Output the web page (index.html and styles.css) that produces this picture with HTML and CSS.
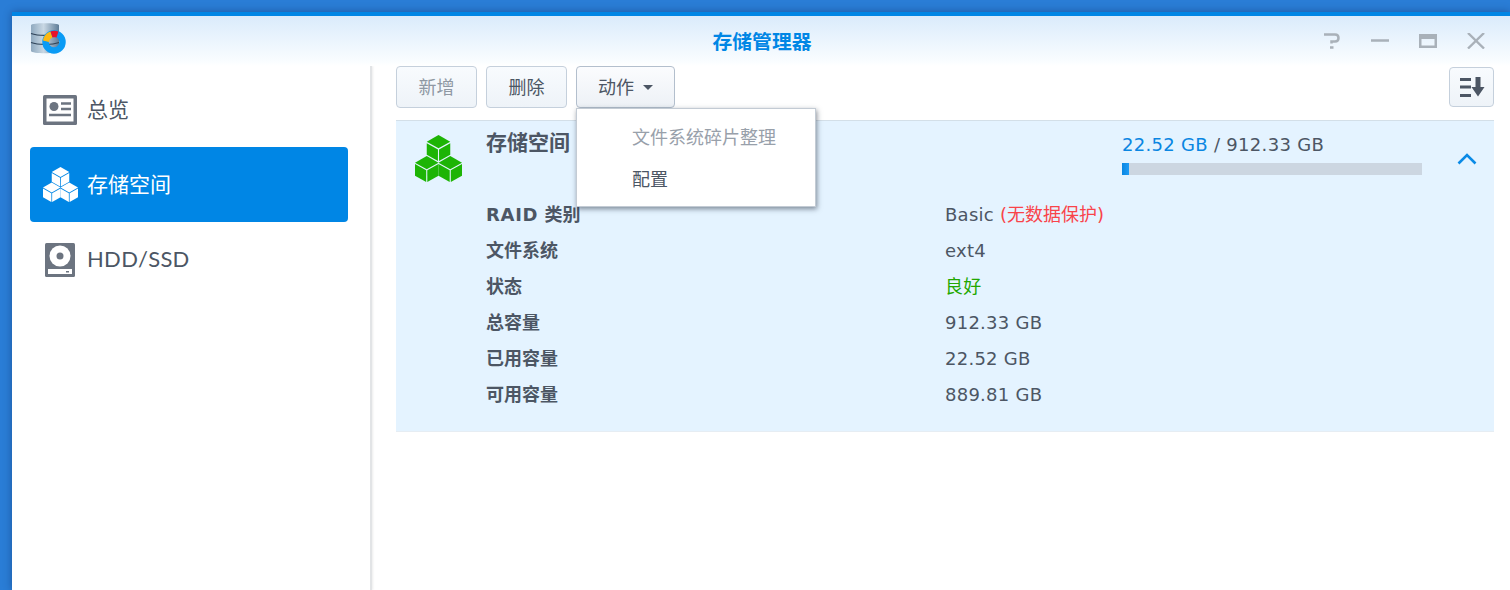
FILE: index.html
```html
<!DOCTYPE html>
<html lang="zh-CN">
<head>
<meta charset="utf-8">
<title>存储管理器</title>
<link rel="stylesheet" href="styles.css">
</head>
<body>
<svg class="defs" width="0" height="0" aria-hidden="true">
  <defs>
    <symbol id="cubes" viewBox="2 1 44 45" preserveAspectRatio="none">
      <g fill="currentColor">
        <path d="M24 1 35 7.500 24 13.800 13 7.500Z"/><path d="M13 8.800 23.500 14.800V26L13 20Z"/><path d="M35 8.800 24.500 14.800V26L35 20Z"/>
        <path d="M13 21 24 27.500 13 33.800 2 27.500Z"/><path d="M2 28.800 12.500 34.800V46L2 40Z"/><path d="M24 28.800 13.500 34.800V46L24 40Z"/>
        <path d="M35 21 46 27.500 35 33.800 24 27.500Z"/><path d="M24 28.800 34.500 34.800V46L24 40Z"/><path d="M46 28.800 35.500 34.800V46L46 40Z"/>
      </g>
    </symbol>
    <linearGradient id="db" x1="0" x2="1" y1="0" y2="0">
      <stop offset="0" stop-color="#8fa9bf"/><stop offset=".45" stop-color="#c9d8e4"/><stop offset="1" stop-color="#5f7d98"/>
    </linearGradient>
  </defs>
</svg>
<div class="window">
  <header class="titlebar">
    <svg class="app-icon" viewBox="0 0 36 36" width="36" height="36">
      <path d="M1 4C1 1.500 29 1.500 29 4V30C29 33 1 33 1 30Z" fill="url(#db)"/>
      <path d="M1 12.500C8 15 22 15 29 12.500M1 21.500C8 24 22 24 29 21.500" fill="none" stroke="#2f4358" stroke-width="1.300"/>
      <circle cx="24" cy="21" r="8.500" fill="none" stroke="#0a9bf5" stroke-width="6.500"/>
      <path d="M13 19.500C13.500 15 17 11.500 20.500 10.500L22.500 16.500C20.500 17 19.500 19 19 21Z" fill="#fdb813"/>
      <path d="M20.500 10.500C23 9.500 26 9.500 28.500 10.500L26.500 16.500C25 16 24 16 22.500 16.500Z" fill="#e8122a"/>
    </svg>
    <h1 class="app-title">存储管理器</h1>
    <div class="win-controls">
      <svg class="ctl" viewBox="0 0 18 16" width="18" height="16"><path d="M1 1.500H12C14.800 1.500 15.500 3 15.500 5S14.800 8.500 12 8.500H8.500V10.500M7 14.500H10.500" fill="none" stroke="#a9b1b9" stroke-width="2.500"/></svg>
      <svg class="ctl" viewBox="0 0 18 16" width="18" height="16"><path d="M0 7.500H18" stroke="#a9b1b9" stroke-width="2.500"/></svg>
      <svg class="ctl" viewBox="0 0 18 16" width="18" height="16"><path d="M0 1H18V15H0Z M2.500 6V12.500H15.500V6Z" fill="#a9b1b9" fill-rule="evenodd"/></svg>
      <svg class="ctl" viewBox="0 0 18 16" width="18" height="16"><path d="M1 0 17 15.500M17 0 1 15.500" stroke="#a9b1b9" stroke-width="2.400"/></svg>
    </div>
  </header>
  <div class="body">
    <nav class="sidebar">
      <a class="nav-item">
        <span class="nav-icon">
          <svg viewBox="0 0 34 30" width="34" height="30"><rect width="34" height="30" rx="1.500" fill="#6c7480"/><rect x="3.500" y="3.500" width="27" height="23" fill="#fff"/><circle cx="11" cy="11.500" r="4.500" fill="#6c7480"/><path d="M18 8.500H28M18 14H28M6 20H28" stroke="#6c7480" stroke-width="2.400"/></svg>
        </span>
        <span class="nav-label">总览</span>
      </a>
      <a class="nav-item active">
        <span class="nav-icon"><svg width="35" height="35"><use href="#cubes"/></svg></span>
        <span class="nav-label">存储空间</span>
      </a>
      <a class="nav-item">
        <span class="nav-icon">
          <svg viewBox="0 0 30 34" width="30" height="34"><rect width="30" height="34" rx="1.500" fill="#6c7480"/><circle cx="15" cy="13" r="10.500" fill="#fff"/><circle cx="15" cy="13" r="3.500" fill="#6c7480"/><rect x="3" y="26" width="24" height="5" fill="#fff"/><rect x="21" y="28" width="3" height="1.500" fill="#6c7480"/></svg>
        </span>
        <span class="nav-label latin-nav">HDD/SSD</span>
      </a>
    </nav>
    <main class="content">
      <div class="toolbar">
        <button class="btn disabled"><span class="btn-label">新增</span></button>
        <button class="btn"><span class="btn-label">删除</span></button>
        <div class="dropdown">
          <button class="btn btn-drop"><span class="btn-label">动作</span><i class="caret"></i></button>
          <ul class="menu">
            <li class="menu-item muted">文件系统碎片整理</li>
            <li class="menu-item">配置</li>
          </ul>
        </div>
        <button class="btn btn-sort" aria-label="排序">
          <svg viewBox="0 0 25 20" width="25" height="20"><path d="M0 2.500H11M0 10H11M0 18.500H11" stroke="#4c5664" stroke-width="3"/><path d="M15.500 0H20.500V10H24.500L18 19.500 11.500 10H15.500Z" fill="#4c5664"/></svg>
        </button>
      </div>
      <section class="panel">
        <div class="panel-head">
          <svg class="panel-icon" width="47" height="47"><use href="#cubes"/></svg>
          <h2 class="panel-title">存储空间</h2>
          <div class="usage">
            <div class="usage-text"><span class="used">22.52 GB</span> / 912.33 GB</div>
            <div class="bar"><div class="bar-fill" style="width:2.470%"></div></div>
          </div>
          <svg class="chevron" viewBox="0 0 20 12" width="20" height="12"><path d="M1.500 10.500 10 2 18.500 10.500" fill="none" stroke="#0a8ae6" stroke-width="2.600"/></svg>
        </div>
        <dl class="details">
          <dt><span class="latin-bold">RAID</span> 类别</dt><dd>Basic <span class="warn">(无数据保护)</span></dd>
          <dt>文件系统</dt><dd>ext4</dd>
          <dt>状态</dt><dd class="good">良好</dd>
          <dt>总容量</dt><dd>912.33 GB</dd>
          <dt>已用容量</dt><dd>22.52 GB</dd>
          <dt>可用容量</dt><dd>889.81 GB</dd>
        </dl>
      </section>
    </main>
  </div>
</div>
</body>
</html>
```
FILE: styles.css
```css
* { box-sizing: border-box; }
html, body { height: 100%; overflow: hidden; }
body {
  margin: 0;
  padding: 12px 0 0 12px;
  background: #2a7dd6;
  color: #4c5664;
  font-family: "DejaVu Sans", "Noto Sans CJK SC", sans-serif;
  font-size: 18px;
}
.defs { position: absolute; }
.window {
  height: 100%;
  overflow: hidden;
  background: #fff;
  border-top: 4px solid #0086e5;
  box-shadow: 0 0 8px rgba(10, 40, 90, .45);
  display: flex;
  flex-direction: column;
}
.titlebar {
  height: 50px;
  flex: none;
  display: flex;
  align-items: center;
  justify-content: center;
  position: relative;
  background: linear-gradient(#daebfb, #fafdff 46px, #fff);
}
.app-icon { position: absolute; left: 18px; top: 5px; }
.app-title {
  margin: 0 0 2px 2px;
  color: #0086e5;
  font: 700 19.800px "Noto Sans CJK SC", sans-serif;
}
.win-controls {
  position: absolute;
  right: 25px;
  top: 17px;
  display: flex;
  gap: 30px;
}
.ctl { display: block; }
.body { flex: 1; display: flex; min-height: 0; }
.sidebar {
  width: 360px;
  flex: none;
  padding: 6px 22px 0 18px;
  border-right: 2px solid #e2e4e6;
  box-shadow: 1px 0 2px rgba(0, 0, 0, .08);
}
.nav-item {
  height: 75px;
  display: flex;
  align-items: center;
  padding-left: 13px;
  border-radius: 4px;
  color: #4c5664;
  font: 21px "Noto Sans CJK SC", sans-serif;
}
.nav-item.active { background: #0086e5; color: #fff; }
.nav-icon { width: 44px; display: flex; flex: none; }
.nav-icon svg { display: block; }
.nav-item:nth-child(3) .nav-icon { padding-left: 2px; }
.nav-label { margin-bottom: 4px; }
.latin-nav { font-family: Lato, "Noto Sans", sans-serif; font-size: 22px; letter-spacing: .3px; margin-bottom: 2px; }
.content { flex: 1; padding: 0 16px 0 24px; min-width: 0; }
.toolbar { display: flex; gap: 9px; height: 54px; align-items: flex-start; }
.btn {
  width: 81px;
  height: 42px;
  padding: 0;
  border: 1px solid #c5d0dc;
  border-radius: 4px;
  background: linear-gradient(#f8fbfe, #eef3f8);
  color: #4c5664;
  font: 18px "Noto Sans CJK SC", sans-serif;
}
.btn-label { display: block; margin-bottom: 2px; }
.btn.disabled { color: #8f98a3; }
.btn-drop {
  width: 99px;
  border-color: #b3bfcd;
  background: linear-gradient(#fbfcfe, #edf1f6);
  display: flex;
  align-items: center;
  justify-content: center;
  gap: 9px;
}
.caret {
  width: 0;
  height: 0;
  border: 5px solid transparent;
  border-top-color: #4c5664;
  border-bottom-width: 0;
}
.dropdown { position: relative; }
.menu {
  position: absolute;
  left: 0;
  top: 42px;
  z-index: 2;
  width: 240px;
  height: 99px;
  margin: 0;
  padding: 6px 0 0 55px;
  list-style: none;
  background: #fff;
  border: 1px solid #c3cbd4;
  box-shadow: 1px 2px 5px rgba(40, 50, 65, .55);
}
.menu-item { height: 42px; font: 18px/42px "Noto Sans CJK SC", sans-serif; }
.muted { color: #98a0aa; }
.btn-sort {
  width: 45px;
  height: 40px;
  margin-left: auto;
  margin-top: 1px;
  padding-left: 2px;
  display: flex;
  align-items: center;
  justify-content: center;
}
.panel {
  height: 312px;
  background: #e4f3ff;
  border-top: 1px solid #d3dfe8;
  border-bottom: 1px solid #e6edf3;
}
.panel-head { display: flex; height: 76px; position: relative; }
.panel-icon { color: #1db405; position: absolute; left: 19px; top: 14px; }
.panel-title {
  margin: 0;
  position: absolute;
  left: 90px;
  top: 4px;
  font: 700 21px/32px "Noto Sans CJK SC", sans-serif;
}
.usage { position: absolute; left: 726px; top: 12px; width: 300px; letter-spacing: .3px; }
.usage-text { height: 30px; line-height: 24px; }
.used { color: #0a86e2; }
.bar { height: 12px; background: #ccd6e1; }
.bar-fill { height: 100%; background: linear-gradient(90deg, #0a86e2, #1e9bf5); }
.chevron { position: absolute; left: 1061px; top: 32px; }
.details {
  margin: 0;
  padding: 0 0 0 90px;
  display: grid;
  grid-template-columns: 459px 1fr;
  grid-auto-rows: 36px;
  line-height: 36px;
}
.details dt { font-weight: 700; }
.details dd { margin: 0; letter-spacing: .25px; }
.latin-bold { letter-spacing: .7px; }
.warn { color: #f9434a; letter-spacing: 0; }
.good { color: #22a800; }
```
